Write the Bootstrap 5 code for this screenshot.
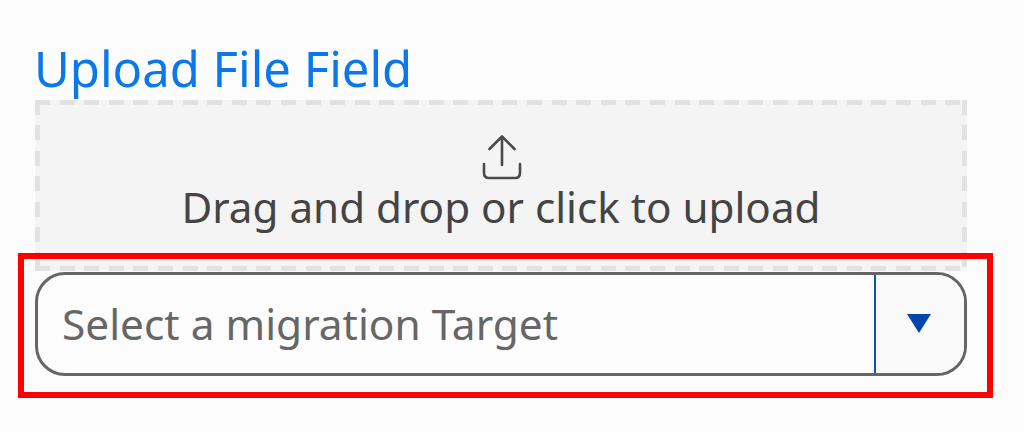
<!DOCTYPE html>
<html lang="en">
<head>
<meta charset="utf-8">
<title>Upload File Field</title>
<link href="https://cdn.jsdelivr.net/npm/bootstrap@5.3.0/dist/css/bootstrap.min.css" rel="stylesheet">
<style>
html, body { height: 100%; }
body { background: #fcfcfc; font-family: "Noto Sans", sans-serif; overflow: hidden; }
.page-wrap { width: 932px; margin-left: 35px; padding-top: 37px; }
.field-title { color: #0a78ec; font-size: 49px; line-height: 63px; font-weight: 400; margin: 0 0 0 -1px; }
.drop-zone {
  height: 171px; color: #444; font-size: 42.200px; line-height: 54px; padding-top: 32px;
  background-color: #f4f4f4;
  background-image:
    repeating-linear-gradient(90deg, #e2e2e2 0 15px, transparent 15px 24.600px),
    repeating-linear-gradient(90deg, #e2e2e2 0 15px, transparent 15px 24.600px),
    repeating-linear-gradient(180deg, #e2e2e2 0 15px, transparent 15px 25.400px),
    repeating-linear-gradient(180deg, #e2e2e2 0 15px, transparent 15px 25.400px);
  background-size: 100% 5px, 100% 5px, 5px 100%, 5px 100%;
  background-position: left top, left bottom, left top, right top;
  background-repeat: no-repeat;
}
.drop-zone svg { display: block; width: 46px; height: 48px; }
.select-wrap { margin-top: 1px; height: 104px; border: 3px solid #666; border-radius: 30px; background: #fcfcfc; }
.select-text { color: #666; font-size: 42.400px; padding-left: 24px; }
.select-arrow { width: 90px; padding: 0 2px 1px 0; border-left: 2px solid #0f55a8; background: #f9f9f9; border-radius: 0 27px 27px 0; }
.select-arrow i { display: block; width: 0; height: 0; border-left: 12.500px solid transparent; border-right: 12.500px solid transparent; border-top: 19px solid #0047ab; }
.red-frame { position: absolute; left: -17px; right: -26px; top: -19px; bottom: -22px; border: 6px solid #ff0000; pointer-events: none; }
</style>
</head>
<body>
<div class="page-wrap">
  <h1 class="field-title">Upload File Field</h1>
  <div class="drop-zone d-flex flex-column align-items-center">
    <svg viewBox="0 0 46 48" fill="none" stroke="#4a4a4a" stroke-width="2.6" stroke-linecap="round" stroke-linejoin="round" aria-hidden="true">
      <path d="M24 5V33M11.500 17 24 4.500 36.500 17"/>
      <path d="M6 32V41Q6 46 11 46H37Q42 46 42 41V32"/>
    </svg>
    <span>Drag and drop or click to upload</span>
  </div>
  <div class="position-relative">
    <div class="select-wrap d-flex align-items-stretch">
      <div class="select-text flex-grow-1 d-flex align-items-center">Select a migration Target</div>
      <div class="select-arrow d-flex align-items-center justify-content-center"><i></i></div>
    </div>
    <div class="red-frame"></div>
  </div>
</div>
<script src="https://cdn.jsdelivr.net/npm/bootstrap@5.3.0/dist/js/bootstrap.bundle.min.js"></script>
</body>
</html>
